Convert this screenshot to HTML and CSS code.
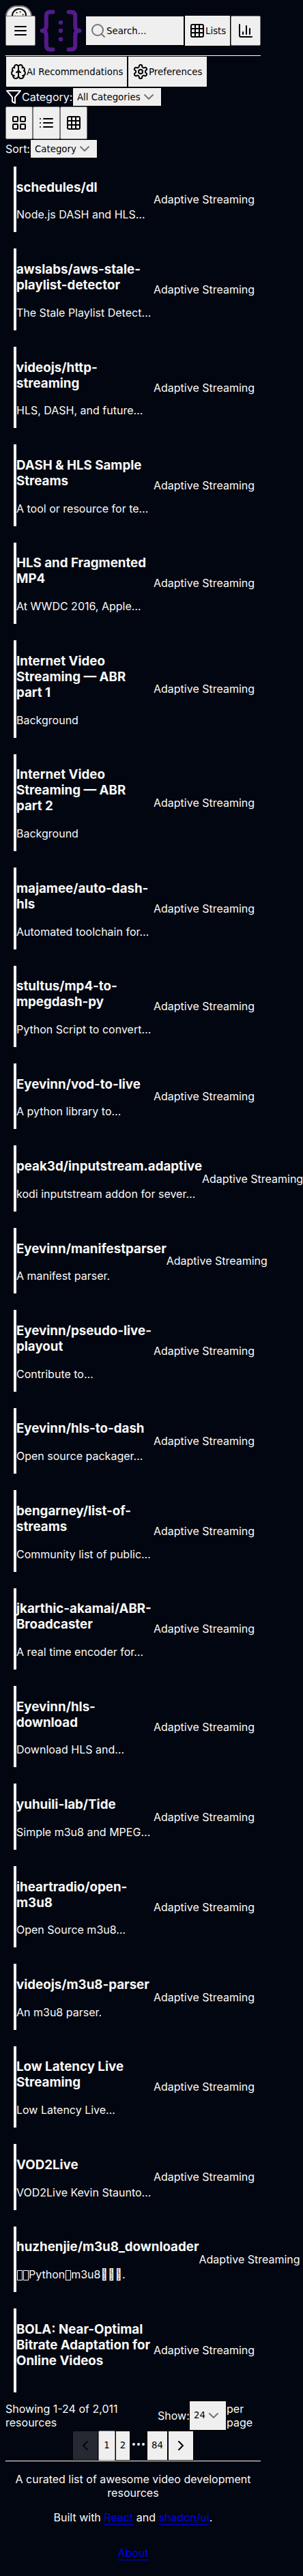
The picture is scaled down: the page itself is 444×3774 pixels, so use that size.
FILE: index.html
```html
<!DOCTYPE html>
<html lang="en">
<head>
<meta charset="utf-8">
<title>Awesome Video</title>
<link rel="stylesheet" href="styles.css">
</head>
<body>
<div class="page">
<header class="header">
  <button class="btn palette"><svg class="icon" viewBox="0 0 24 24"><circle cx="13.5" cy="6.5" r=".5"/><circle cx="17.5" cy="10.5" r=".5"/><circle cx="8.5" cy="7.5" r=".5"/><circle cx="6.5" cy="12.5" r=".5"/><path d="M12 2C6.5 2 2 6.5 2 12s4.500 10 10 10c.926 0 1.648-.746 1.648-1.688 0-.437-.18-.835-.437-1.125-.29-.289-.438-.652-.438-1.125a1.640 1.640 0 0 1 1.668-1.668h1.996c3.051 0 5.555-2.503 5.555-5.554C21.965 6.012 17.461 2 12 2z"/></svg></button>
  <button class="btn menu"><svg class="icon" viewBox="0 0 24 24"><path d="M4 6h16M4 12h16M4 18h16"/></svg></button>
  <a class="logo"><svg viewBox="0 0 64 64"><path d="M20.500 4.500h-3.700q-6 0-6 6V25q0 7-6.300 7q6.300 0 6.300 7v14.500q0 6 6 6h3.700M43.500 4.500h3.700q6 0 6 6V25q0 7 6.300 7q-6.300 0-6.300 7v14.500q0 6-6 6h-3.700"/><circle cx="32" cy="20" r="3.200"/><circle cx="32" cy="32" r="3.200"/><circle cx="32" cy="44.500" r="3.200"/></svg></a>
  <button class="btn flat search"><svg class="icon muted" viewBox="0 0 24 24"><circle cx="11" cy="11" r="8"/><path d="m21 21-4.300-4.300"/></svg>Search...</button>
  <button class="btn flat lists"><svg class="icon" viewBox="0 0 24 24"><rect x="3" y="3" width="18" height="18" rx="2"/><path d="M3 9h18M3 15h18M9 3v18M15 3v18"/></svg>Lists</button>
  <button class="btn chart"><svg class="icon" viewBox="0 0 24 24"><path d="M3 3v16a2 2 0 0 0 2 2h16M18 17V9M13 17V5M8 17v-3"/></svg></button>
</header>
<main>
  <div class="row tools">
    <button class="btn flat ai"><svg class="icon" viewBox="0 0 24 24"><path d="M12 5a3 3 0 1 0-5.997.125 4 4 0 0 0-2.526 5.770 4 4 0 0 0 .556 6.588A4 4 0 1 0 12 18Z"/><path d="M12 5a3 3 0 1 1 5.997.125 4 4 0 0 1 2.526 5.770 4 4 0 0 1-.556 6.588A4 4 0 1 1 12 18Z"/><path d="M15 13a4.500 4.500 0 0 1-3-4 4.500 4.500 0 0 1-3 4M17.599 6.500a3 3 0 0 0 .399-1.375M6.003 5.125A3 3 0 0 0 6.401 6.500M3.477 10.896a4 4 0 0 1 .585-.396M19.938 10.500a4 4 0 0 1 .585.396M6 18a4 4 0 0 1-1.967-.516M19.967 17.484A4 4 0 0 1 18 18"/></svg>AI Recommendations</button>
    <button class="btn flat prefs"><svg class="icon" viewBox="0 0 24 24"><path d="M12.220 2h-.44a2 2 0 0 0-2 2v.18a2 2 0 0 1-1 1.730l-.43.250a2 2 0 0 1-2 0l-.15-.08a2 2 0 0 0-2.730.730l-.22.380a2 2 0 0 0 .730 2.730l.150.100a2 2 0 0 1 1 1.720v.510a2 2 0 0 1-1 1.740l-.15.090a2 2 0 0 0-.73 2.730l.220.380a2 2 0 0 0 2.730.730l.150-.08a2 2 0 0 1 2 0l.430.250a2 2 0 0 1 1 1.730V20a2 2 0 0 0 2 2h.440a2 2 0 0 0 2-2v-.18a2 2 0 0 1 1-1.730l.430-.25a2 2 0 0 1 2 0l.150.080a2 2 0 0 0 2.730-.73l.220-.39a2 2 0 0 0-.73-2.730l-.15-.08a2 2 0 0 1-1-1.740v-.5a2 2 0 0 1 1-1.740l.150-.09a2 2 0 0 0 .730-2.730l-.22-.38a2 2 0 0 0-2.730-.73l-.15.080a2 2 0 0 1-2 0l-.43-.25a2 2 0 0 1-1-1.730V4a2 2 0 0 0-2-2z"/><circle cx="12" cy="12" r="3"/></svg>Preferences</button>
  </div>
  <div class="row filter"><svg class="icon" viewBox="0 0 24 24"><path d="M22 3H2l8 9.460V19l4 2v-8.540z"/></svg><span class="label">Category:</span><button class="btn flat select">All Categories<svg class="chev" viewBox="0 0 24 24"><path d="m6 9 6 6 6-6"/></svg></button></div>
  <div class="row views">
    <button class="btn"><svg class="icon" viewBox="0 0 24 24"><rect x="3" y="3" width="7" height="7" rx="1"/><rect x="14" y="3" width="7" height="7" rx="1"/><rect x="14" y="14" width="7" height="7" rx="1"/><rect x="3" y="14" width="7" height="7" rx="1"/></svg></button>
    <button class="btn"><svg class="icon" viewBox="0 0 24 24"><path d="M8 6h13M8 12h13M8 18h13M3 6h.01M3 12h.01M3 18h.01"/></svg></button>
    <button class="btn"><svg class="icon" viewBox="0 0 24 24"><rect x="3" y="3" width="18" height="18" rx="2"/><path d="M3 9h18M3 15h18M9 3v18M15 3v18"/></svg></button>
  </div>
  <div class="row sort"><span class="label">Sort:</span><button class="btn flat select">Category<svg class="chev" viewBox="0 0 24 24"><path d="m6 9 6 6 6-6"/></svg></button></div>
  <section class="cards">
    <article class="card"><div class="info"><h3>schedules/dl</h3><p>Node.js DASH and HLS…</p></div><span>Adaptive Streaming</span></article>
    <article class="card"><div class="info"><h3>awslabs/aws-stale-playlist-detector</h3><p>The Stale Playlist Detect…</p></div><span>Adaptive Streaming</span></article>
    <article class="card"><div class="info"><h3>videojs/http-streaming</h3><p>HLS, DASH, and future…</p></div><span>Adaptive Streaming</span></article>
    <article class="card"><div class="info"><h3>DASH &amp; HLS Sample Streams</h3><p>A tool or resource for te…</p></div><span>Adaptive Streaming</span></article>
    <article class="card"><div class="info"><h3>HLS and Fragmented MP4</h3><p>At WWDC 2016, Apple…</p></div><span>Adaptive Streaming</span></article>
    <article class="card"><div class="info"><h3>Internet Video Streaming — ABR part 1</h3><p>Background</p></div><span>Adaptive Streaming</span></article>
    <article class="card"><div class="info"><h3>Internet Video Streaming — ABR part 2</h3><p>Background</p></div><span>Adaptive Streaming</span></article>
    <article class="card"><div class="info"><h3>majamee/auto-dash-hls</h3><p>Automated toolchain for…</p></div><span>Adaptive Streaming</span></article>
    <article class="card"><div class="info"><h3>stultus/mp4-to-mpegdash-py</h3><p>Python Script to convert…</p></div><span>Adaptive Streaming</span></article>
    <article class="card"><div class="info"><h3>Eyevinn/vod-to-live</h3><p>A python library to…</p></div><span>Adaptive Streaming</span></article>
    <article class="card"><div class="info"><h3>peak3d/inputstream.adaptive</h3><p>kodi inputstream addon for sever…</p></div><span>Adaptive Streaming</span></article>
    <article class="card"><div class="info"><h3>Eyevinn/manifestparser</h3><p>A manifest parser.</p></div><span>Adaptive Streaming</span></article>
    <article class="card"><div class="info"><h3>Eyevinn/pseudo-live-playout</h3><p>Contribute to…</p></div><span>Adaptive Streaming</span></article>
    <article class="card"><div class="info"><h3>Eyevinn/hls-to-dash</h3><p>Open source packager…</p></div><span>Adaptive Streaming</span></article>
    <article class="card"><div class="info"><h3>bengarney/list-of-streams</h3><p>Community list of public…</p></div><span>Adaptive Streaming</span></article>
    <article class="card"><div class="info"><h3>jkarthic-akamai/ABR-Broadcaster</h3><p>A real time encoder for…</p></div><span>Adaptive Streaming</span></article>
    <article class="card"><div class="info"><h3>Eyevinn/hls-download</h3><p>Download HLS and…</p></div><span>Adaptive Streaming</span></article>
    <article class="card"><div class="info"><h3>yuhuili-lab/Tide</h3><p>Simple m3u8 and MPEG…</p></div><span>Adaptive Streaming</span></article>
    <article class="card"><div class="info"><h3>iheartradio/open-m3u8</h3><p>Open Source m3u8…</p></div><span>Adaptive Streaming</span></article>
    <article class="card"><div class="info"><h3>videojs/m3u8-parser</h3><p>An m3u8 parser.</p></div><span>Adaptive Streaming</span></article>
    <article class="card"><div class="info"><h3>Low Latency Live Streaming</h3><p>Low Latency Live…</p></div><span>Adaptive Streaming</span></article>
    <article class="card"><div class="info"><h3>VOD2Live</h3><p>VOD2Live Kevin Staunto…</p></div><span>Adaptive Streaming</span></article>
    <article class="card"><div class="info"><h3>huzhenjie/m3u8_downloader</h3><p><i class="box"></i><i class="box"></i>Python<i class="box"></i>m3u8&#xE9A3;&#xE9A4;&#xE9A5;.</p></div><span>Adaptive Streaming</span></article>
    <article class="card"><div class="info"><h3>BOLA: Near-Optimal Bitrate Adaptation for Online Videos</h3><p></p></div><span>Adaptive Streaming</span></article>
  </section>
  <div class="row summary"><div class="count">Showing 1-24 of 2,011 resources</div><span class="show">Show:</span><button class="btn flat select size">24<svg class="chev" viewBox="0 0 24 24"><path d="m6 9 6 6 6-6"/></svg></button><span class="per">per page</span></div>
  <nav class="row pages">
    <button class="btn flat prev"><svg class="icon" viewBox="0 0 24 24"><path d="m15 18-6-6 6-6"/></svg></button>
    <button class="btn one">1</button>
    <button class="btn flat two">2</button>
    <span class="dots"><svg class="icon" viewBox="0 0 24 24"><circle cx="5" cy="12" r="1"/><circle cx="12" cy="12" r="1"/><circle cx="19" cy="12" r="1"/></svg></span>
    <button class="btn flat last">84</button>
    <button class="btn flat next"><svg class="icon" viewBox="0 0 24 24"><path d="m9 18 6-6-6-6"/></svg></button>
  </nav>
</main>
<footer class="footer">
  <p>A curated list of awesome video development resources</p>
  <p>Built with <a href="#">React</a> and <a href="#">shadcn/ui</a>.</p>
  <p class="about"><a href="#">About</a></p>
</footer>
</div>
</body>
</html>
```

FILE: styles.css
```css
html { background: #020610; }
body { margin: 0; color: #fafafa; font: 16px Inter, sans-serif; }
.page { width: 374px; margin-left: 8px; }
svg { display: block; flex: none; fill: none; stroke: currentColor; stroke-width: 2; stroke-linecap: round; stroke-linejoin: round; }
.icon { width: 24px; height: 24px; }
.muted, .chev { opacity: .5; }
.chev { width: 24px; height: 24px; }
.row { display: flex; align-items: center; }
.btn { display: flex; align-items: center; justify-content: center; box-sizing: border-box; flex: none; margin: 0; padding: 0; border: 1px solid #767676; border-radius: 2px; background: #efefef; color: #000; font: 13.333px "DejaVu Sans", sans-serif; white-space: nowrap; }
.flat { border: 1px solid #000; border-radius: 0; }

.header { position: relative; display: flex; align-items: center; box-sizing: border-box; height: 82px; padding-top: 9px; border-bottom: 1px solid #fafafa; }
.palette { position: absolute; left: 0; top: 8px; width: 39px; height: 40px; align-items: flex-start; padding: 1px 0 0 1px; border: 2px solid #767676; border-radius: 16px; }
.palette circle { fill: currentColor; stroke-width: 1; }
.menu { z-index: 1; width: 44px; height: 44px; }
.logo { width: 64px; margin: 0 4.5px; color: #551a8b; }
.logo svg { width: 64px; height: 64px; stroke-width: 6; }
.logo circle { fill: currentColor; stroke: none; }
.search, .lists, .ai, .prefs { justify-content: flex-start; padding-left: 6px; }
.search { width: 145px; height: 44px; }
.lists { width: 68px; height: 46px; }
.chart { width: 44px; height: 44px; }

.tools { height: 46px; }
.ai { width: 179px; height: 46px; }
.prefs { width: 117px; height: 46px; }
.filter { height: 28px; }
.filter .label { width: 74px; }
.filter .btn { width: 131px; height: 28px; }
.select { justify-content: space-between; padding: 0 6px; }
.views { height: 48px; }
.views .btn { width: 40px; height: 48px; }
.sort { height: 28px; }
.sort .label { width: 36px; }
.sort .btn { width: 99px; height: 28px; }

.cards { padding-top: 12px; }
.card { display: flex; align-items: center; width: max-content; margin: 0 12px 24px; border-left: 4px solid #fafafa; }
.card:last-child { margin-bottom: 12px; }
.info { width: min-content; min-width: 201px; }
.info h3 { margin: 18.72px 0; font-size: 18.72px; }
.info p { width: 0; min-width: 100%; margin: 16px 0; overflow: hidden; white-space: nowrap; }
.box { display: inline-block; box-sizing: border-box; width: 8px; height: 15px; margin: 0 .5px; border: 1px solid #fafafa; vertical-align: -3px; }

.summary { height: 44px; }
.count { width: 223px; }
.show { width: 46px; }
.size { width: 55px; height: 44px; }
.per { width: 50px; }
.pages { justify-content: center; height: 44px; }
.pages .btn { height: 44px; }
.prev { width: 38px; opacity: .15; }
.one { width: 25px; }
.two { width: 22px; }
.dots { width: 24px; padding-bottom: 4px; }
.last { width: 31px; }
.next { width: 38px; }

.footer { border-top: 1px solid #fafafa; text-align: center; }
.footer a { color: #00e; text-underline-offset: 4px; text-decoration-skip-ink: none; }
.footer .about { margin-top: 32px; }
```
